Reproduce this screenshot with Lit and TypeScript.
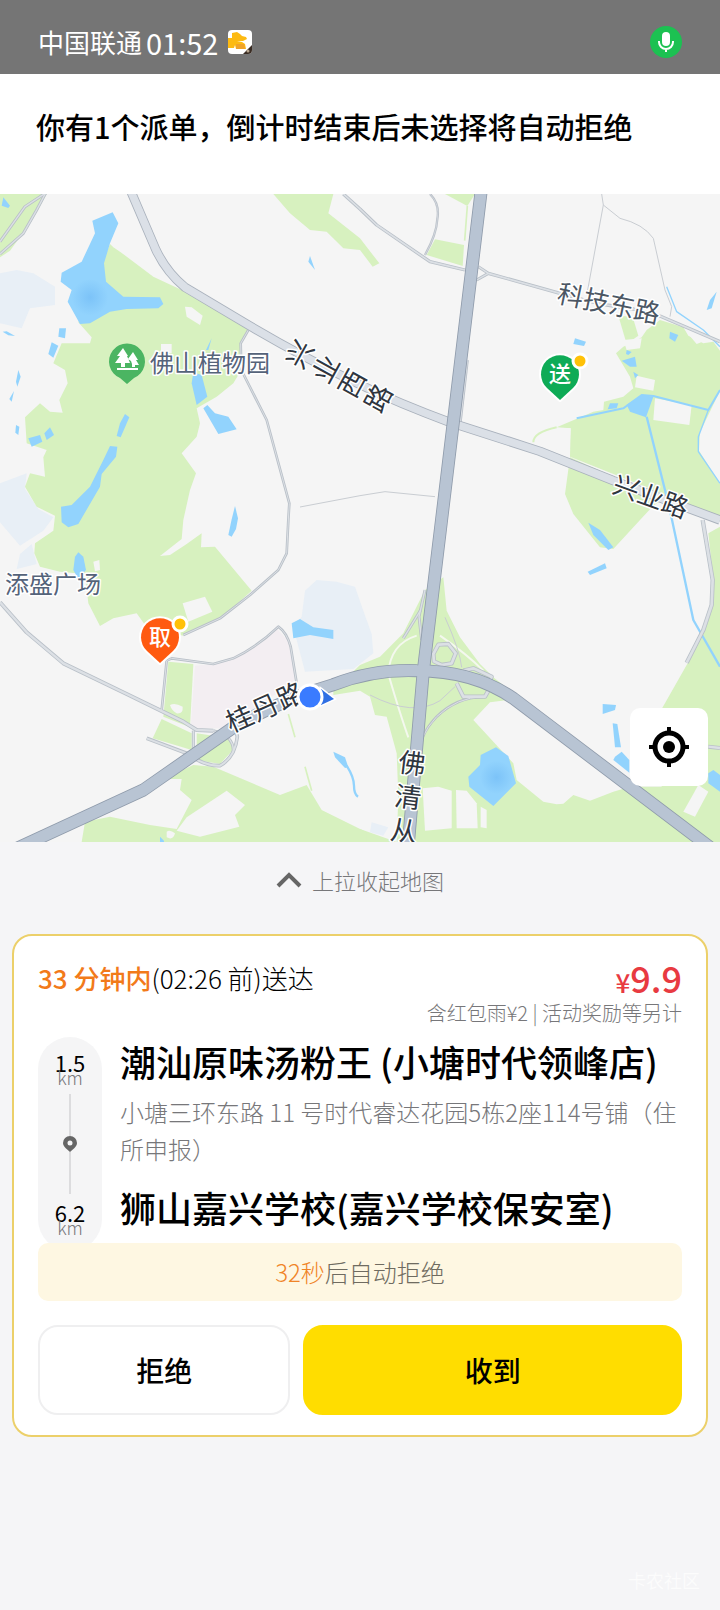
import { html, svg, css, LitElement } from "lit";
import { customElement, property } from "lit/decorators.js";

interface RoadLabel {
  x: number;
  y: number;
  angle: number;
  size: number;
  pitch: number;
  text: string;
  minor?: boolean;
  /** Characters run down the road instead of along it */
  stacked?: boolean;
}

interface Road {
  d: string;
  width: number;
}

// Map geometry is drawn on a 2160x1944 grid, three units to one map pixel
const HAZE = [
  "M0 238 L50 228 100 238 165 278 V333 L90 343 65 403 0 388Z",
  "M0 868 L80 838 75 885 115 945 160 970 130 1010 60 1055 0 985Z",
  "M95 1050 L110 1110 50 1125 60 1080Z",
  "M950 1158 L1010 1163 1065 1178 1090 1250 1115 1320 1120 1378 1060 1425 915 1433 880 1300 905 1268 915 1190Z",
  "M1115 1885 L1165 1900 1150 1925 1110 1915Z",
];

const PARKS = [
  "M0 0 H140 L95 80 30 170 0 190Z",
  "M340 160 L360 173 460 248 550 290 640 338 745 408 722 448 724 528 700 568 650 608 590 643 600 688 590 728 545 778 588 838 570 888 550 978 545 1035 480 1086 510 1083 560 1050 605 1018 603 1060 645 1058 755 1190 680 1258 650 1278 550 1325 440 1300 410 1258 340 1273 300 1296 265 1228 255 1140 180 1133 120 1118 103 1078 105 1048 160 1010 165 965 110 938 75 878 90 838 135 848 130 790 140 768 80 748 75 670 120 628 150 653 188 656 178 618 203 568 195 528 160 508 185 448 270 448 275 430 235 385 310 200 330 150Z",
  "M820 0 H1000 L985 58 1080 133 1138 208 1118 218 1080 168 1030 163 980 113 930 108 870 58Z",
  "M1335 0 H1425 L1402 36Z",
  "M1305 136 L1392 153 1388 216 1280 183Z",
  "M1855 365 L1898 368 1915 425 1880 450Z",
  "M1940 408 L1980 378 2050 400 2065 425 2110 448 2140 443 2160 470 V973 L2060 928 1710 788 1712 703 1670 700 1780 653 1810 648 1812 623 1870 608 1900 583 1890 548 1848 478 1870 458 1925 430Z",
  "M1710 790 L1695 900 1720 960 1800 1060 1840 1065 1920 978 1960 935 1990 915Z",
  "M2160 998 L2125 1018 2140 1158 2130 1238 2080 1378 1985 1545 V1800 H2160Z",
  "M1330 1150 L1340 1250 1380 1330 1440 1410 1480 1450 1560 1513 1470 1525 1420 1578 1540 1708 1550 1758 1630 1823 1670 1831 1690 1829 1720 1803 1770 1820 1840 1793 1890 1778 H2160 V1944 H1190 L1195 1808 1190 1678 1160 1568 1125 1563 1110 1508 1080 1490 1000 1503 V1490 L1080 1413 1140 1388 1210 1318 1275 1188Z",
  "M1080 1905 L1190 1944 H1080Z",
  "M580 1713 L640 1718 840 1803 920 1773 965 1848 1100 1915 V1944 H245 L255 1883 330 1868 450 1893 530 1905 575 1818 540 1788 545 1755 490 1755Z",
  "M505 1403 L580 1410 570 1600 490 1568Z",
  "M485 1575 L575 1618 V1668 L458 1633Z",
  "M590 1618 L690 1633 705 1660 690 1678 660 1710 590 1698Z",
];

const CLEARINGS = [
  "M555 338 L575 340 608 365 600 393 560 368Z",
  "M483 450 H515 V478 H483Z",
  "M548 1228 L615 1208 637 1253 565 1283Z",
  "M280 1103 L298 1098 300 1128 285 1132Z",
  "M510 1533 Q525 1525 548 1538 Q550 1560 530 1558 Q515 1550 510 1533Z",
  "M1965 613 L2075 633 2068 693 1960 678Z",
  "M1910 545 L1965 558 1960 590 1905 580Z",
  "M1870 438 L1925 433 1920 463 1880 468Z",
  "M2060 415 L2085 420 2115 440 2090 450Z",
  "M2160 590 L2100 715 2097 770 2160 870Z",
  "M560 1870 L680 1790 735 1833 705 1863 718 1898 600 1928 530 1910Z",
  "M500 1913 Q510 1905 525 1918 Q520 1940 500 1930Z",
  "M1600 700 L1712 703 1708 780 1600 745Z",
  "M1268 1783 L1315 1778 1355 1790 V1903 L1275 1910Z",
  "M1368 1788 L1400 1790 1430 1828 1433 1903 H1370Z",
  "M1442 1838 L1460 1848 V1903 L1442 1900Z",
  "M2095 1773 L2125 1793 2085 1868 2050 1853Z",
];

const WATER = [
  "M338 55 L355 88 330 148 312 208 318 263 370 308 480 310 490 330 475 343 380 345 330 353 270 388 240 390 203 323 215 288 182 263 185 236 245 203 285 118 277 80Z",
  "M10 10 L30 35 25 42 5 35Z",
  "M178 403 L198 403 195 433 175 428Z",
  "M155 445 L175 455 160 491 145 480Z",
  "M8 413 L20 412 45 426 25 424Z",
  "M55 528 L62 548 52 578 48 563Z",
  "M42 591 L35 623 28 615Z",
  "M48 693 L58 698 55 723 46 716Z",
  "M85 733 L120 723 127 743 95 758Z",
  "M150 700 L162 723 140 738 133 718Z",
  "M375 660 L388 670 362 730 350 726 360 688Z",
  "M330 756 L352 758 348 788 305 840 300 878 235 990 205 1000 185 985 183 938 215 933 270 878 310 798Z",
  "M635 433 L625 468 618 468Z",
  "M580 535 L605 543 622 608 590 633 575 568Z",
  "M622 633 L645 658 685 668 710 706 655 720 610 643Z",
  "M705 936 L714 973 708 1005 695 1028 685 1023 695 976Z",
  "M235 1075 L250 1088 258 1128 235 1155 220 1128 225 1088Z",
  "M875 1288 L900 1275 940 1300 1000 1308 V1335 L930 1323 880 1333Z",
  "M1000 1673 L1035 1690 1045 1720 1035 1722 1005 1690Z",
  "M930 186 L945 228 925 203Z",
  "M1725 433 L1758 443 1752 456 1720 450Z",
  "M2150 293 L2135 343 2120 348 2130 318Z",
  "M2010 413 L2035 423 2025 443 2008 433Z",
  "M1880 468 L1895 474 1885 483 1878 480Z",
  "M1865 500 L1905 488 1910 518 1890 518Z",
  "M1900 533 L1915 543 1905 553Z",
  "M1830 628 H1855 L1850 643 1823 646Z",
  "M1880 632 L1925 603 1960 608 1938 670 1890 653Z",
  "M1765 986 L1800 1008 1840 1060 1825 1068 1780 1023Z",
  "M1815 1108 L1820 1123 1770 1143 1763 1133Z",
  "M1808 1530 L1848 1533 1845 1548 1808 1560Z",
  "M1838 1588 L1852 1590 1863 1660 1845 1660Z",
  "M1845 1688 L1865 1673 1888 1698 V1736 L1840 1698Z",
  "M2125 1738 L2140 1728 2160 1743 V1793 L2125 1768Z",
  "M1488 1660 L1525 1686 1548 1768 1480 1836 1408 1778 1405 1748 1440 1713 1442 1683Z",
  "M480 1928 L492 1940 V1944 H480Z",
];

const STREAMS: Road[] = [
  { d: "M2160 588 L2125 648 1960 606 1925 603 1870 643 1730 673", width: 6 },
  { d: "M2125 648 L2095 728 V773 L2160 868", width: 4 },
  { d: "M1940 668 L1995 888 2015 973 2080 1278 2160 1418", width: 7 },
  { d: "M2000 278 L2030 353 2110 408 2160 458", width: 4 },
  { d: "M1040 1715 Q1062 1750 1062 1775 T1074 1808", width: 7 },
];

const PATHS: Road[] = [
  { d: "M1805 0 L1810 33 1763 288", width: 3 },
  { d: "M1810 33 L1860 73 Q1930 90 1960 133 L1995 288 2015 338 2010 368", width: 3 },
  { d: "M900 939 L1080 905 1155 893 1305 908", width: 3 },
  { d: "M1110 1503 Q1240 1570 1320 1520 L1365 1478", width: 3 },
  { d: "M1335 1270 Q1380 1370 1385 1420", width: 3 },
];

const LANES: Road[] = [
  { d: "M1080 45 L1130 93 1290 203 1395 228", width: 10 },
  { d: "M1030 0 L1080 45", width: 10 },
  { d: "M1290 0 Q1320 30 1312 75 Q1310 120 1275 183", width: 7 },
  { d: "M1435 218 L1465 238 1430 258", width: 9 },
  { d: "M1465 238 L1680 298 1800 330 1900 345 1985 368 2160 443", width: 10 },
  { d: "M745 408 L722 448 724 528 800 678 868 928 865 978 860 1078 835 1128 750 1203 660 1273 550 1323", width: 8 },
  { d: "M0 1225 L80 1315 190 1408 380 1500 550 1583 590 1608 640 1610", width: 12 },
  { d: "M485 1548 L500 1400 515 1393 640 1410 700 1393 Q770 1360 835 1298 Q860 1315 872 1358 L890 1468", width: 8 },
  { d: "M440 1633 L560 1678 Q610 1716 660 1715 Q705 1690 712 1628 L705 1600", width: 11 },
  { d: "M640 1610 Q700 1625 700 1670", width: 9 },
  { d: "M580 1610 V1680", width: 9 },
  { d: "M140 -5 L75 38 0 143", width: 9 },
  { d: "M138 -5 L110 48 70 118 0 180", width: 9 },
  { d: "M2108 978 L2138 1158 2135 1233 2110 1308 2060 1406", width: 13 },
  { d: "M2125 1658 L2160 1662", width: 12 },
  { d: "M1402 498 L1380 690", width: 9 },
  { d: "M1275 1188 L1257 1268 1265 1338", width: 9 },
  { d: "M1262 1248 L1210 1333", width: 9 },
  { d: "M1300 1380 L1315 1352 1345 1350 1367 1378 1355 1408 1325 1413 1302 1402Z", width: 13 },
  { d: "M1390 1430 L1420 1423 1475 1448 1465 1470", width: 13 },
  { d: "M1370 1468 L1390 1508 1455 1508 1465 1490", width: 13 },
  { d: "M1450 1508 Q1370 1510 1310 1568 Q1280 1600 1268 1630", width: 8 },
];

const STREETS: Road[] = [
  { d: "M394 -5 L468 168 Q500 235 555 280 L740 390 Q900 485 1080 572 Q1200 630 1350 685 L1620 772 1840 860 2160 978", width: 23 },
];

const HIGHWAYS: Road[] = [
  { d: "M1443 -5 L1325 975 1270 1430 1225 1950", width: 34 },
  { d: "M40 1968 L430 1788 700 1600 Q850 1515 1000 1472 Q1120 1425 1250 1430 Q1420 1430 1540 1513 L2130 1960", width: 34 },
];

const ROAD_LABELS: RoadLabel[] = [
  { x: 339, y: 182, angle: -61, size: 27, pitch: 30, text: "兴业西路", stacked: true },
  { x: 609, y: 109, angle: 12, size: 26, pitch: 26, text: "科技东路", minor: true },
  { x: 651, y: 302, angle: 20, size: 26, pitch: 26, text: "兴业路" },
  { x: 265, y: 513, angle: -24, size: 27, pitch: 28, text: "桂丹路" },
  { x: 408, y: 603, angle: 7, size: 27, pitch: 34, text: "佛清从", stacked: true },
];

const fills = (paths: string[]) => paths.map((d) => svg`<path d=${d} />`);

const strokes = (roads: Road[], extra = 0) =>
  roads.map((road) => svg`<path d=${road.d} stroke-width=${road.width + extra} />`);

@customElement("dispatch-map")
export class DispatchMapElement extends LitElement {
  static styles = css`
    :host {
      display: block;
      position: relative;
    }

    .map {
      display: block;
      width: 100%;
      height: auto;
      font-family: "Noto Sans CJK SC", sans-serif;
    }

    .land {
      fill: #f5f5f5;
    }

    .haze {
      fill: #e8eff6;
    }

    .campus {
      fill: #f3eef2;
    }

    .park {
      fill: #d7f1bf;
    }

    .water {
      fill: #92d3fd;
    }

    .line {
      fill: none;
      stroke-linejoin: round;
    }

    .stream {
      stroke: #92d3fd;
    }

    .path {
      stroke: #c9cdd2;
    }

    .lane-edge {
      stroke: #b9c0c8;
    }

    .lane {
      stroke: #dce0e5;
    }

    .street-edge {
      stroke: #a9b1bc;
    }

    .street {
      stroke: #dbe0e7;
    }

    .highway-edge {
      stroke: #8f9bab;
    }

    .highway {
      stroke: #b8c4d3;
    }

    .label {
      fill: #2f3640;
      stroke: #ffffff;
      stroke-width: 3px;
      stroke-linejoin: round;
      paint-order: stroke;
      text-anchor: middle;
      font-weight: 400;
    }

    .label.minor {
      fill: #4c5764;
    }

    .place {
      fill: #55637a;
      font-size: 24px;
      text-anchor: start;
    }

    .pin-text {
      fill: #ffffff;
      font-size: 22px;
      font-weight: 500;
      text-anchor: middle;
    }

    .locate {
      position: absolute;
      right: 12px;
      bottom: 56px;
      display: grid;
      place-items: center;
      width: 78px;
      height: 78px;
      padding: 0;
      border: 0;
      border-radius: 10px;
      background: #ffffff;
    }
  `;

  private renderRoadLabel(label: RoadLabel) {
    const { x, y, angle, size, pitch, text, minor, stacked } = label;
    const middle = (text.length - 1) / 2;
    const steps = [...text].map((_, i) => (i - middle) * pitch);
    const xs = steps.map((step) => (stacked ? 0 : step));
    const ys = steps.map((step) => (stacked ? step + 10 : 10));

    return svg`
      <text
        class="label ${minor ? "minor" : ""}"
        transform="translate(${x} ${y}) rotate(${angle})"
        font-size=${size}
        x=${xs.join(" ")}
        y=${ys.join(" ")}
      >${text}</text>
    `;
  }

  private renderPin(x: number, y: number, color: string, text: string) {
    return svg`
      <g transform="translate(${x} ${y})">
        <path
          d="M0 26 L-13 14 A19 19 0 1 1 13 14Z"
          fill=${color}
          stroke="#ffffff"
          stroke-width="4"
          paint-order="stroke"
          stroke-linejoin="round"
        />
        <text class="pin-text" x="0" y="8">${text}</text>
        <circle cx="20" cy="-13" r="7" fill="#ffc108" stroke="#ffffff" stroke-width="3" />
      </g>
    `;
  }

  render() {
    return html`
      <svg class="map" viewBox="0 0 720 648" role="img" aria-label="配送地图">
        <defs>
          <radialGradient id="deep">
            <stop offset="0" stop-color="#7cc3f8" />
            <stop offset="1" stop-color="#7cc3f8" stop-opacity="0" />
          </radialGradient>
        </defs>
        <svg width="720" height="648" viewBox="0 0 2160 1944">
          <rect class="land" width="2160" height="1944" />
          <g class="haze">${fills(HAZE)}</g>
          <path
            class="campus"
            d="M585 1415 L660 1408 750 1363 830 1303 870 1348 885 1458 720 1578 660 1603 572 1603Z"
          />
          <g class="park">${fills(PARKS)}</g>
          <path class="line" d="M1402 36 L1394 140 M865 1560 L885 1630 M915 1718 L935 1790" stroke="#d7f1bf" stroke-width="5" />
          <g class="land">${fills(CLEARINGS)}</g>
          <path class="line" d="M1600 745 Q1600 715 1670 700" stroke="#d7f1bf" stroke-width="6" />
          <path
            class="line"
            d="M1250 1325 Q1170 1350 1165 1440 Q1200 1560 1225 1630 M1320 1325 Q1400 1380 1450 1430"
            stroke="#f4f8ee"
            stroke-width="6"
          />
          <g class="water">${fills(WATER)}</g>
          <circle cx="270" cy="310" r="55" fill="url(#deep)" />
          <circle cx="1490" cy="1750" r="50" fill="url(#deep)" />
          <g class="line stream">${strokes(STREAMS)}</g>
          <g class="line path">${strokes(PATHS)}</g>
          <g class="line lane-edge">${strokes(LANES)}</g>
          <g class="line lane">${strokes(LANES, -5)}</g>
          <g class="line street-edge">${strokes(STREETS, 5)}</g>
          <g class="line street">${strokes(STREETS)}</g>
          <g class="line highway-edge">${strokes(HIGHWAYS, 5)}</g>
          <g class="line highway">${strokes(HIGHWAYS)}</g>
        </svg>

        ${ROAD_LABELS.map((label) => this.renderRoadLabel(label))}
        <text class="label place" x="150" y="178">佛山植物园</text>
        <text class="label place" x="5" y="399">添盛广场</text>

        <g transform="translate(127 167)">
          <path d="M0 23 L-7 17 A18 18 0 1 1 7 17Z" fill="#4bb562" />
          <path
            d="M-4 -13 L-10 -5 H-7 L-12 2 H-6 V6 H-2 V2 H3 L0 -5 H1Z M6 -9 L1 -2 4 0 5 3 V6 H8 V4 H12 L9 -1 H11Z M-10 7 H11 V9 H-10Z"
            fill="#ffffff"
          />
        </g>
        ${this.renderPin(560, 180, "#0eab56", "送")}
        ${this.renderPin(160, 443, "#ff5a10", "取")}

        <path d="M321 495 L334 505 321 511Z" fill="#2f6fe4" stroke="#ffffff" stroke-width="3" paint-order="stroke" />
        <circle cx="310" cy="503" r="12" fill="#3a7bff" stroke="#ffffff" stroke-width="3" />
      </svg>

      <button class="locate" type="button" aria-label="定位">
        <svg width="40" height="40" viewBox="0 0 40 40">
          <circle cx="20" cy="20" r="14" fill="none" stroke="#000000" stroke-width="5" />
          <circle cx="20" cy="20" r="6" />
          <path d="M20 0V6M20 34V40M0 20H6M34 20H40" stroke="#000000" stroke-width="4" />
        </svg>
      </button>
    `;
  }
}

@customElement("order-card")
export class OrderCardElement extends LitElement {
  static styles = css`
    :host {
      display: block;
    }

    .card {
      padding: 24px 24px 20px;
      border: 2px solid #ecd06a;
      border-radius: 20px;
      background: #ffffff;
    }

    .summary {
      display: flex;
      flex-wrap: wrap;
      align-items: center;
      justify-content: space-between;
      font-size: 26px;
      font-weight: 300;
      line-height: 34px;
    }

    .deadline {
      margin: 0;
    }

    .remaining {
      color: #f27a1a;
      font-weight: 500;
    }

    .price {
      color: #e83a41;
      font-size: 36px;
      font-weight: 500;
    }

    .currency {
      font-size: 26px;
      line-height: 1;
    }

    .note {
      margin: 6px 0 12px;
      color: #77777a;
      font-size: 20px;
      font-weight: 300;
      line-height: 24px;
      text-align: right;
    }

    .route {
      display: grid;
      grid-template-columns: 64px 1fr;
      gap: 18px;
    }

    .legs {
      display: flex;
      flex-direction: column;
      align-items: center;
      margin-bottom: -8px;
      padding: 17px 0;
      border-radius: 32px;
      background: #f5f5f6;
    }

    .distance {
      font-size: 22px;
      line-height: 16px;
      text-align: center;
    }

    .unit {
      display: block;
      color: #77777a;
      font-size: 18px;
      font-weight: 300;
      line-height: 14px;
    }

    .track {
      display: flex;
      flex: 1;
      flex-direction: column;
      align-items: center;
      margin: 10px 0;
    }

    .track::before,
    .track::after {
      content: "";
      flex: 1;
      width: 2px;
      background: #dcdcde;
    }

    .stops {
      padding: 2px 0 14px;
    }

    .stop {
      margin: 0;
      font-size: 36px;
      font-weight: 500;
      line-height: 44px;
    }

    .address {
      margin: 10px 0 18px;
      color: #77777a;
      font-size: 24px;
      font-weight: 300;
      line-height: 37px;
    }

    .countdown {
      position: relative;
      margin: 0 0 24px;
      border-radius: 10px;
      background: #fef7e2;
      color: #6f6b60;
      font-size: 24px;
      font-weight: 300;
      line-height: 58px;
      text-align: center;
    }

    .seconds {
      color: #f08427;
    }

    .actions {
      display: grid;
      grid-template-columns: 2fr 3fr;
      gap: 13px;
    }

    .action {
      height: 90px;
      padding: 0;
      border: 2px solid #efeff0;
      border-radius: 20px;
      background: #ffffff;
      color: #000000;
      font-family: inherit;
      font-size: 28px;
      font-weight: 500;
    }

    .action.primary {
      border-color: #ffdd00;
      background: #ffdd00;
    }
  `;

  @property()
  private remaining = "33 分钟内";

  @property()
  private price = "9.9";

  @property({ type: Number })
  private seconds = 32;

  render() {
    return html`
      <section class="card">
        <div class="summary">
          <p class="deadline"><span class="remaining">${this.remaining}</span>(02:26 前)送达</p>
          <span class="price"><span class="currency">¥</span>${this.price}</span>
        </div>
        <p class="note">含红包雨¥2 | 活动奖励等另计</p>

        <div class="route">
          <div class="legs">
            <div class="distance">1.5<span class="unit">km</span></div>
            <div class="track">
              <svg width="14" height="16" viewBox="0 0 14 16">
                <path
                  d="M7 16 C5 14 0 11 0 7 A7 7 0 1 1 14 7 C14 11 9 14 7 16Z M7 4.5 A2.5 2.5 0 1 0 7 9.5 A2.5 2.5 0 1 0 7 4.5Z"
                  fill="#666666"
                  fill-rule="evenodd"
                />
              </svg>
            </div>
            <div class="distance">6.2<span class="unit">km</span></div>
          </div>
          <div class="stops">
            <h2 class="stop">潮汕原味汤粉王 (小塘时代领峰店)</h2>
            <p class="address">小塘三环东路 11 号时代睿达花园5栋2座114号铺（住所申报）</p>
            <h2 class="stop">狮山嘉兴学校(嘉兴学校保安室)</h2>
          </div>
        </div>

        <p class="countdown"><span class="seconds">${this.seconds}秒</span>后自动拒绝</p>

        <div class="actions">
          <button class="action" type="button">拒绝</button>
          <button class="action primary" type="button">收到</button>
        </div>
      </section>
    `;
  }
}

@customElement("app-root")
export class AppRootElement extends LitElement {
  static styles = css`
    :host {
      display: flex;
      flex-direction: column;
      min-height: 100vh;
      background: #f5f5f7;
      color: #000000;
      font-family: "Noto Sans CJK SC", sans-serif;
    }

    .status {
      display: flex;
      align-items: center;
      gap: 10px;
      padding: 26px 38px 16px;
      background: #757575;
      color: #ffffff;
      font-size: 26px;
      line-height: 32px;
    }

    .carrier {
      display: flex;
      align-items: center;
      gap: 4px;
    }

    .clock {
      font-size: 29px;
    }

    .mic {
      margin-left: auto;
    }

    .header {
      padding: 32px 36px 48px;
      background: #ffffff;
    }

    .title {
      margin: 0;
      font-size: 29px;
      font-weight: 500;
      line-height: 40px;
    }

    .collapse {
      display: flex;
      align-items: center;
      justify-content: center;
      gap: 10px;
      padding: 22px 0 38px;
      border: 0;
      background: none;
      color: #77777a;
      font-family: inherit;
      font-size: 22px;
      font-weight: 300;
      line-height: 32px;
    }

    .order {
      margin: 0 12px;
    }

    .watermark {
      margin: auto 20px 16px auto;
      color: #ffffff;
      font-size: 18px;
      line-height: 28px;
      opacity: 0.7;
    }
  `;

  render() {
    return html`
      <div class="status">
        <span class="carrier">中国联通<span class="clock">01:52</span></span>
        <svg width="24" height="24" viewBox="0 0 24 24" aria-hidden="true">
          <rect width="24" height="24" rx="4" fill="#ffffff" />
          <path d="M4 3 L9 2 12 4 14 6 18 7 19 9 15 11 H8 L4 8Z" fill="#fdba12" />
          <path d="M0 8 H7 L9 11 14 12 17 14 18 19 H8 L7 15 6 18 H0Z" fill="#fdba12" />
          <path d="M8 14 L16 14 17 19 H8Z" fill="#f0a32a" />
          <path d="M24 15 V20 Q24 24 20 24 H15Z" fill="#3b2d24" />
          <circle cx="20" cy="21" r="1.5" fill="#b9a78f" />
        </svg>
        <svg class="mic" width="32" height="32" viewBox="0 0 32 32" aria-hidden="true">
          <circle cx="16" cy="16" r="16" fill="#1cc152" />
          <rect x="12" y="6" width="8" height="14" rx="4" fill="#ffffff" />
          <path d="M9 15 V16 A7 7 0 0 0 23 16 V15 M16 23 V26" fill="none" stroke="#ffffff" stroke-width="2" />
        </svg>
      </div>

      <header class="header">
        <h1 class="title">你有1个派单，倒计时结束后未选择将自动拒绝</h1>
      </header>

      <dispatch-map></dispatch-map>

      <button class="collapse" type="button">
        <svg width="26" height="16" viewBox="0 0 26 16" aria-hidden="true">
          <path d="M2 14 L13 3 24 14" fill="none" stroke="#666666" stroke-width="4" />
        </svg>
        上拉收起地图
      </button>

      <order-card class="order"></order-card>

      <span class="watermark">卡农社区</span>
    `;
  }
}

declare global {
  interface HTMLElementTagNameMap {
    "dispatch-map": DispatchMapElement;
    "order-card": OrderCardElement;
    "app-root": AppRootElement;
  }
}
